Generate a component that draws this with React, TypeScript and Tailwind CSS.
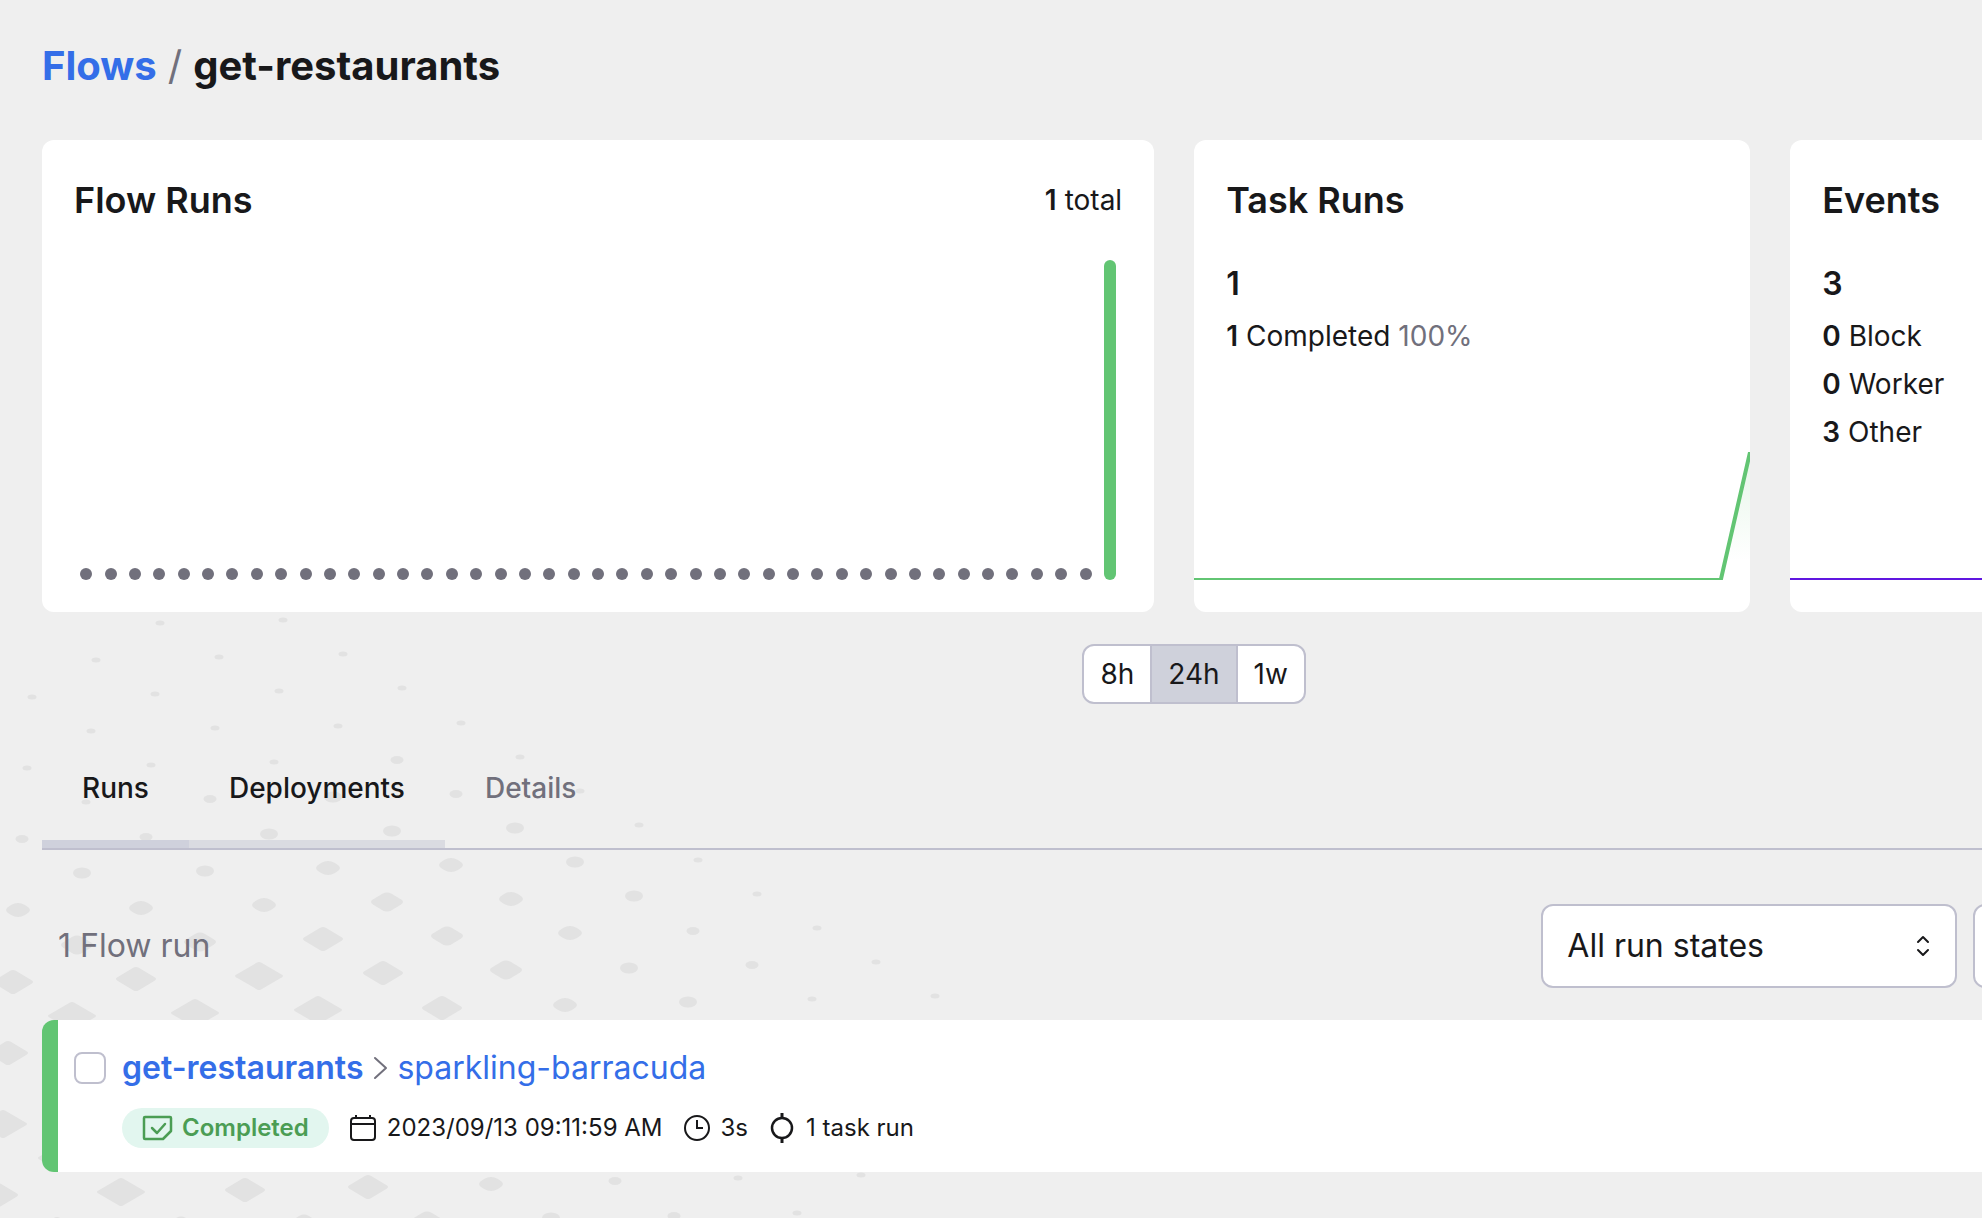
import React, { useState } from "react";

type Size = 1 | 2 | 3 | 4 | 5 | 6 | 7;
type Mark = [number, number, Size];

const extents: Record<Size, [number, number]> = {
  1: [9, 5],
  2: [13, 8],
  3: [18, 11],
  4: [24, 14],
  5: [32, 19],
  6: [40, 24],
  7: [48, 28],
};

const rounding: Record<Size, number> = { 1: 1, 2: 1, 3: 1, 4: 0.9, 5: 0.5, 6: 0.26, 7: 0.16 };

const marks: Mark[] = [
  [160, 623, 1], [283, 620, 1],
  [96, 660, 1], [219, 657, 1], [343, 654, 1],
  [32, 697, 1], [155, 694, 1], [279, 691, 1], [402, 688, 1],
  [91, 731, 1], [215, 728, 1], [338, 726, 1], [461, 723, 1],
  [27, 768, 1], [151, 765, 1], [274, 762, 1], [397, 760, 2], [520, 757, 1],
  [86, 802, 1], [210, 799, 2], [333, 797, 3], [456, 794, 2], [580, 791, 1],
  [22, 839, 2], [146, 837, 2], [269, 834, 3], [392, 831, 3], [515, 828, 3], [639, 825, 1],
  [82, 873, 3], [205, 871, 3], [328, 868, 4], [451, 865, 4], [575, 862, 3], [698, 860, 1],
  [18, 910, 4], [141, 908, 4], [264, 905, 4], [387, 902, 5], [511, 899, 4], [634, 896, 3], [757, 894, 1],
  [77, 945, 5], [200, 942, 5], [323, 939, 6], [447, 936, 5], [570, 933, 4], [693, 931, 2], [817, 928, 1],
  [13, 982, 6], [136, 979, 6], [259, 976, 7], [383, 973, 6], [506, 970, 5], [629, 968, 3], [752, 965, 2], [876, 962, 1],
  [72, 1016, 7], [195, 1013, 7], [318, 1010, 7], [442, 1008, 6], [565, 1005, 4], [688, 1002, 3], [812, 999, 1], [935, 996, 1],
  [8, 1053, 6], [3, 1124, 7], [62, 1158, 7],
  [-2, 1195, 6], [121, 1192, 7], [245, 1190, 6], [368, 1187, 6], [491, 1184, 4], [615, 1181, 2], [738, 1178, 1], [861, 1175, 1],
  [57, 1229, 6], [181, 1226, 5], [304, 1224, 5], [427, 1221, 5], [551, 1218, 3], [674, 1216, 2], [797, 1213, 1],
];

function diamondPath([x, y, size]: Mark) {
  const f = rounding[size] / 2;
  const w = extents[size][0] / 2 / (1 - f / 2);
  const h = extents[size][1] / 2 / (1 - f / 2);
  const k = 1 - f;
  return [
    `M${x - w * f} ${y - h * k}`,
    `Q${x} ${y - h} ${x + w * f} ${y - h * k}`,
    `L${x + w * k} ${y - h * f}`,
    `Q${x + w} ${y} ${x + w * k} ${y + h * f}`,
    `L${x + w * f} ${y + h * k}`,
    `Q${x} ${y + h} ${x - w * f} ${y + h * k}`,
    `L${x - w * k} ${y + h * f}`,
    `Q${x - w} ${y} ${x - w * k} ${y - h * f}Z`,
  ].join("");
}

function Backdrop() {
  return (
    <svg
      aria-hidden="true"
      className="pointer-events-none absolute left-0 top-0 -z-10 fill-[#e2e2e2]"
      width="1000"
      height="1218"
      viewBox="0 0 1000 1218"
    >
      {marks.map((m) =>
        m[2] <= 3 ? (
          <ellipse key={`${m[0]}-${m[1]}`} cx={m[0]} cy={m[1]} rx={extents[m[2]][0] / 2} ry={extents[m[2]][1] / 2} />
        ) : (
          <path key={`${m[0]}-${m[1]}`} d={diamondPath(m)} />
        ),
      )}
    </svg>
  );
}

function FlowRunsCard() {
  return (
    <section className="rounded-xl bg-white p-8">
      <div className="flex items-center justify-between">
        <h2 className="text-[36px] leading-[56px] font-semibold">Flow Runs</h2>
        <p className="flex gap-2 text-[28px] leading-[48px]">
          <span className="font-semibold">1</span>
          <span>total</span>
        </p>
      </div>
      <div className="mt-8 flex h-80 items-end">
        {Array.from({ length: 43 }, (_, i) => (
          <div key={i} className="flex h-full flex-1 items-end justify-center">
            <div className={i === 42 ? "h-full w-3 rounded-full bg-[#62c573]" : "size-3 rounded-full bg-[#71707c]"} />
          </div>
        ))}
      </div>
    </section>
  );
}

type Stat = { count: number; label: string; percent?: string };

function StatCard({ title, total, stats, color, id }: { title: string; total: number; stats: Stat[]; color: string; id: string }) {
  return (
    <section className="flex flex-col overflow-hidden rounded-xl bg-white py-8">
      <div className="px-8">
        <h2 className="text-[36px] leading-[56px] font-semibold">{title}</h2>
        <p className="mt-8 text-[32px] leading-[48px] font-semibold">{total}</p>
        <ul className="mt-1 -mb-1 text-[28px] leading-[48px]">
          {stats.map((s) => (
            <li key={s.label} className="flex gap-2">
              <span className="font-semibold">{s.count}</span>
              <span>{s.label}</span>
              {s.percent && <span className="text-[#71707c]">{s.percent}</span>}
            </li>
          ))}
        </ul>
      </div>
      <svg aria-hidden="true" className="mt-auto h-32 w-full shrink-0" viewBox="0 0 556 128" preserveAspectRatio="none">
        <defs>
          <linearGradient id={id} x1="0" y1="0" x2="0" y2="1">
            <stop offset="0" stopColor={color} stopOpacity="0.16" />
            <stop offset="0.85" stopColor={color} stopOpacity="0" />
          </linearGradient>
        </defs>
        <path d="M0 128H526.7L556 0V128Z" fill={`url(#${id})`} />
        <path d="M0 128H526.7L556 0" fill="none" stroke={color} strokeWidth="4" vectorEffect="non-scaling-stroke" />
      </svg>
    </section>
  );
}

function RangeToggle() {
  const [range, setRange] = useState("24h");
  return (
    <div className="mt-8 flex justify-center">
      <div className="flex divide-x-2 divide-[#bfbfce] overflow-hidden rounded-xl border-2 border-[#bfbfce] bg-white">
        {["8h", "24h", "1w"].map((r) => (
          <button
            key={r}
            type="button"
            aria-pressed={range === r}
            onClick={() => setRange(r)}
            className="px-4 text-[28px] leading-[56px] aria-pressed:bg-[#cfd1db]"
          >
            {r}
          </button>
        ))}
      </div>
    </div>
  );
}

function Tabs() {
  return (
    <div role="tablist" className="mt-8 flex border-b-2 border-b-[#bfbfce] text-[28px] leading-[104px] font-medium">
      <button type="button" role="tab" aria-selected="true" className="border-b-8 border-b-[#cfd1dc] px-10">
        Runs
      </button>
      <button type="button" role="tab" aria-selected="false" className="border-b-8 border-b-[#dadbe1] px-10">
        Deployments
      </button>
      <button type="button" role="tab" aria-selected="false" className="border-b-8 border-b-transparent px-10 text-[#71707c]">
        Details
      </button>
    </div>
  );
}

function Select({ label, options, className }: { label: string; options: string[]; className: string }) {
  return (
    <div className={`relative ${className}`}>
      <select
        aria-label={label}
        className="h-[84px] w-full appearance-none rounded-xl border-2 border-[#bfbfce] bg-white pr-16 pl-6 text-[32px]"
      >
        {options.map((o) => (
          <option key={o}>{o}</option>
        ))}
      </select>
      <svg
        aria-hidden="true"
        className="pointer-events-none absolute top-1/2 right-[18px] size-8 -translate-y-1/2"
        viewBox="0 0 32 32"
        fill="none"
        stroke="currentColor"
        strokeWidth="2"
        strokeLinecap="round"
        strokeLinejoin="round"
      >
        <path d="M11 12l5-5 5 5M11 20l5 5 5-5" />
      </svg>
    </div>
  );
}

const iconProps = {
  "aria-hidden": true,
  className: "size-8 shrink-0",
  viewBox: "0 0 32 32",
  fill: "none",
  stroke: "currentColor",
  strokeWidth: 2,
} as const;

function RunRow() {
  return (
    <article className="mt-8 flex rounded-xl border-l-[16px] border-[#62c573] bg-white px-4 py-6">
      <input
        type="checkbox"
        aria-label="Select sparkling-barracuda"
        className="mt-2 size-8 shrink-0 appearance-none rounded-lg border-2 border-[#bfbfce] bg-white checked:bg-[#346ee8]"
      />
      <div className="ml-4 flex flex-col gap-4">
        <div className="flex items-center text-[32px] leading-[48px] text-[#346ee8]">
          <a href="#flow" className="font-semibold">
            get-restaurants
          </a>
          <svg aria-hidden="true" className="h-8 w-[34px] text-[#71707c]" viewBox="0 0 34 32" fill="none" stroke="currentColor" strokeWidth="2">
            <path d="M12 6l11 10-11 10" strokeLinecap="round" strokeLinejoin="round" />
          </svg>
          <a href="#run">sparkling-barracuda</a>
        </div>
        <div className="flex items-center gap-[18px] text-[24px] leading-[40px]">
          <span className="flex items-center gap-2 rounded-full bg-[#e2f6ef] px-5 font-semibold text-[#4b9d54]">
            <svg {...iconProps}>
              <path d="M4 5H28Q29 5 29 6V19L21 27H3Q2 27 2 26V6Q2 5 3 5Z" strokeWidth="2.5" strokeLinejoin="round" />
              <path d="M10 16l5 5 8-9" strokeWidth="2.5" strokeLinecap="round" strokeLinejoin="round" />
            </svg>
            Completed
          </span>
          <span className="flex items-center gap-2">
            <svg {...iconProps}>
              <rect x="4" y="6" width="24" height="22" rx="3" />
              <path d="M4 12H28M9 3V6M23 3V6" />
            </svg>
            2023/09/13 09:11:59 AM
          </span>
          <span className="flex items-center gap-2">
            <svg {...iconProps}>
              <circle cx="16" cy="16" r="12" />
              <path d="M16 8V16H22" />
            </svg>
            3s
          </span>
          <span className="flex items-center gap-2">
            <svg {...iconProps}>
              <circle cx="16" cy="16" r="10" strokeWidth="2.5" />
              <path d="M16 1V6M16 26V31" strokeWidth="3" />
            </svg>
            1 task run
          </span>
        </div>
      </div>
    </article>
  );
}

export default function App() {
  return (
    <div className="relative isolate min-h-screen overflow-hidden bg-[#efefef] font-['Inter',sans-serif] text-[#18181a]">
      <Backdrop />
      <main className="w-[120.5%] px-[42px] pt-[38px] pb-11">
        <h1 className="flex gap-[11px] text-[40px] leading-[56px] font-bold">
          <a href="#flows" className="text-[#346ee8]">
            Flows
          </a>
          <span className="font-normal text-[#71707c]">/</span>
          <span>get-restaurants</span>
        </h1>
        <div className="mt-[46px] grid grid-cols-[2fr_1fr_1fr] gap-10">
          <FlowRunsCard />
          <StatCard id="task-fill" title="Task Runs" total={1} color="#62c573" stats={[{ count: 1, label: "Completed", percent: "100%" }]} />
          <StatCard
            id="event-fill"
            title="Events"
            total={3}
            color="#6017e0"
            stats={[
              { count: 0, label: "Block" },
              { count: 0, label: "Worker" },
              { count: 3, label: "Other" },
            ]}
          />
        </div>
        <RangeToggle />
        <Tabs />
        <div className="mt-[54px] flex items-center gap-4">
          <p className="mr-auto pl-4 text-[32px] leading-[48px] text-[#71707c]">1 Flow run</p>
          <Select label="Run states" options={["All run states"]} className="w-[416px]" />
          <Select label="Sort order" options={["Newest to oldest"]} className="w-[373px]" />
        </div>
        <RunRow />
      </main>
    </div>
  );
}
